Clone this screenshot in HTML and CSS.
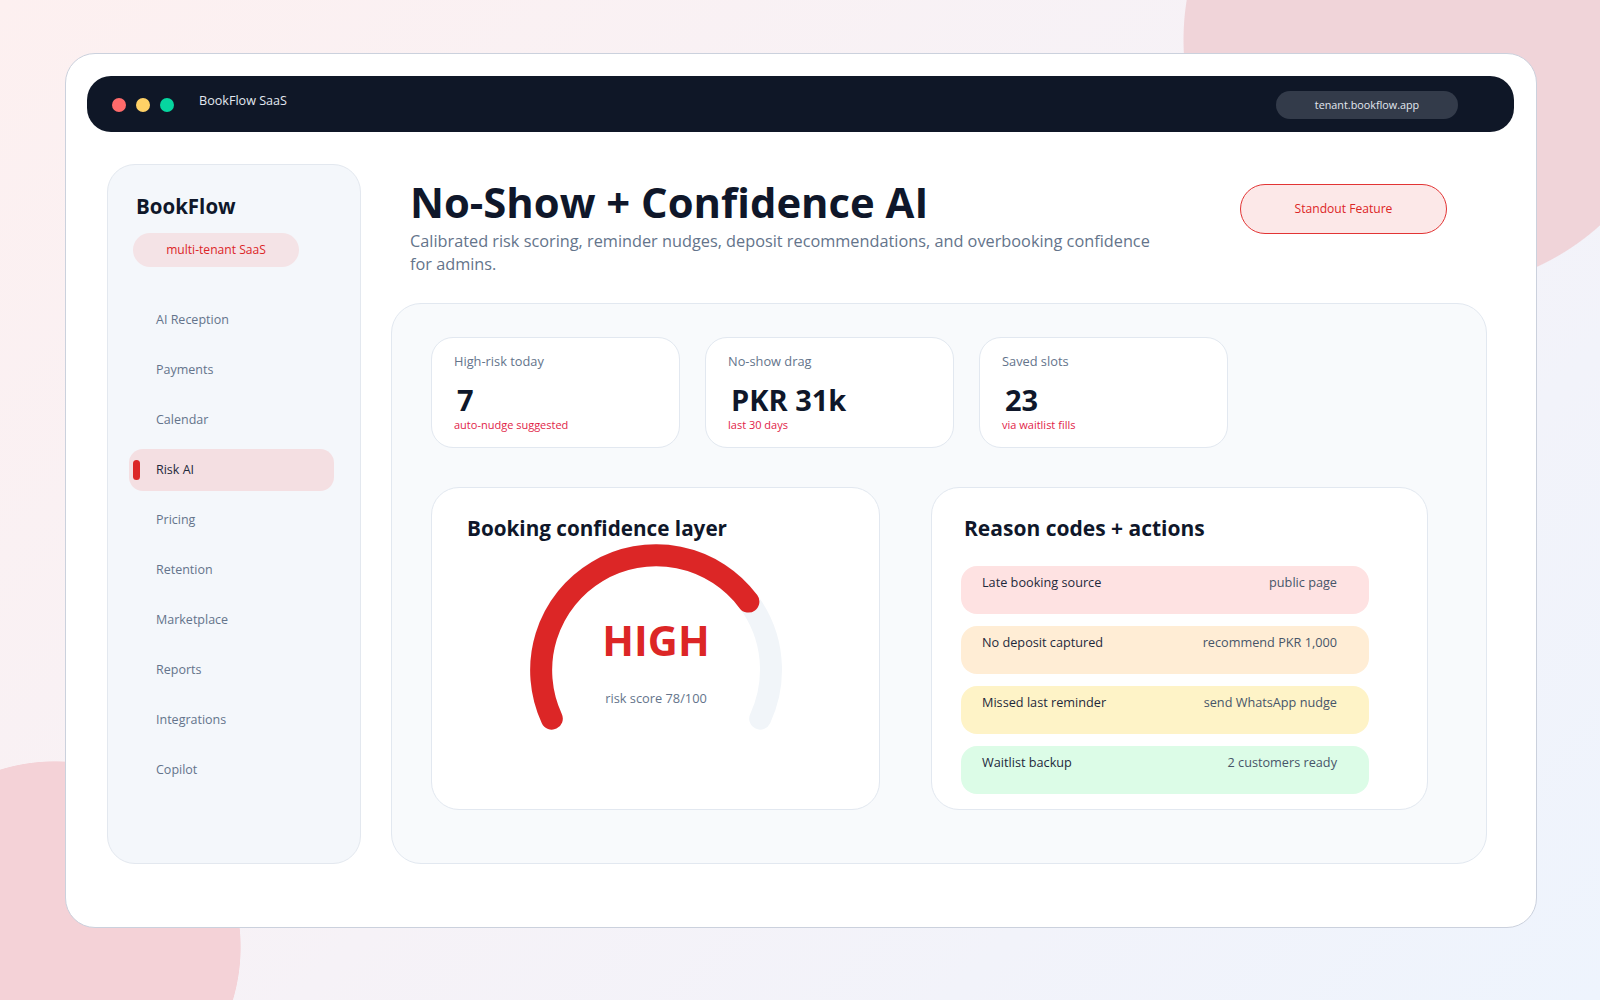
FILE: index.html
```html
<!DOCTYPE html>
<html lang="en">
<head>
<meta charset="utf-8">
<title>BookFlow SaaS – No-Show + Confidence AI</title>
<link rel="stylesheet" href="styles.css">
</head>
<body>
<div class="frame">
  <div class="topbar">
    <span class="dot dot-red"></span>
    <span class="dot dot-yellow"></span>
    <span class="dot dot-green"></span>
    <span class="topbar-title">BookFlow SaaS</span>
    <span class="url-pill">tenant.bookflow.app</span>
  </div>

  <div class="layout">
    <aside class="sidebar">
      <div class="brand">BookFlow</div>
      <div class="tenant-pill">multi-tenant SaaS</div>
      <nav class="nav">
        <div class="nav-item">AI Reception</div>
        <div class="nav-item">Payments</div>
        <div class="nav-item">Calendar</div>
        <div class="nav-item active">Risk AI</div>
        <div class="nav-item">Pricing</div>
        <div class="nav-item">Retention</div>
        <div class="nav-item">Marketplace</div>
        <div class="nav-item">Reports</div>
        <div class="nav-item">Integrations</div>
        <div class="nav-item">Copilot</div>
      </nav>
    </aside>

    <main class="main">
      <header class="header">
        <div class="header-text">
          <h1 class="title">No-Show + Confidence AI</h1>
          <p class="subtitle">Calibrated risk scoring, reminder nudges, deposit recommendations, and overbooking confidence for admins.</p>
        </div>
        <div class="standout">Standout Feature</div>
      </header>

      <section class="panel">
        <div class="stats">
          <div class="stat">
            <div class="stat-label">High-risk today</div>
            <div class="stat-value">7</div>
            <div class="stat-sub">auto-nudge suggested</div>
          </div>
          <div class="stat">
            <div class="stat-label">No-show drag</div>
            <div class="stat-value">PKR 31k</div>
            <div class="stat-sub">last 30 days</div>
          </div>
          <div class="stat">
            <div class="stat-label">Saved slots</div>
            <div class="stat-value">23</div>
            <div class="stat-sub">via waitlist fills</div>
          </div>
        </div>

        <div class="cards">
          <div class="card card-gauge">
            <h2 class="card-title gauge-title">Booking confidence layer</h2>
            <div class="gauge">
              <svg class="gauge-svg" width="260" height="192" viewBox="0 0 260 192">
                <path d="M 25.8 176.6 A 115 115 0 1 1 234.2 176.6" fill="none" stroke="#f1f5f9" stroke-width="22" stroke-linecap="round"/>
                <path d="M 25.8 176.6 A 115 115 0 0 1 222.4 59.6" fill="none" stroke="#dc2626" stroke-width="22" stroke-linecap="round"/>
              </svg>
              <div class="gauge-label">
                <div class="gauge-level">HIGH</div>
                <div class="gauge-score">risk score 78/100</div>
              </div>
            </div>
          </div>

          <div class="card card-reasons">
            <h2 class="card-title reasons-title">Reason codes + actions</h2>
            <div class="reasons">
              <div class="reason reason-pink"><span>Late booking source</span><span class="reason-action">public page</span></div>
              <div class="reason reason-orange"><span>No deposit captured</span><span class="reason-action">recommend PKR 1,000</span></div>
              <div class="reason reason-yellow"><span>Missed last reminder</span><span class="reason-action">send WhatsApp nudge</span></div>
              <div class="reason reason-green"><span>Waitlist backup</span><span class="reason-action">2 customers ready</span></div>
            </div>
          </div>
        </div>
      </section>
    </main>
  </div>
</div>
</body>
</html>
```

FILE: styles.css
```css
* { box-sizing: border-box; }

html, body {
  margin: 0;
  padding: 0;
}

body {
  width: 1600px;
  height: 1000px;
  overflow: hidden;
  font-family: "Open Sans", "Noto Sans", "Liberation Sans", sans-serif;
  color: #0f172a;
  background:
    radial-gradient(circle 250px at 1433px 40px, #f0d4d9 99.6%, rgba(240, 212, 217, 0) 100%),
    radial-gradient(circle 186px at 55px 947px, #f4d2d7 99.6%, rgba(244, 210, 215, 0) 100%),
    linear-gradient(135deg, #fdf0f0 0%, #f6f2f7 50%, #eef4fd 100%);
  background-repeat: no-repeat;
}

.frame {
  margin: 53px 0 0 65px;
  width: 1472px;
  height: 875px;
  background: #ffffff;
  border: 1px solid #cbd1dd;
  border-radius: 30px;
  padding: 22px 22px 0 21px;
}

/* top bar */
.topbar {
  height: 56px;
  background: #0f1727;
  border-radius: 24px;
  display: flex;
  align-items: center;
  padding: 2px 25px 0 25px;
}
.dot {
  width: 14px;
  height: 14px;
  border-radius: 50%;
  margin-right: 10px;
  flex: none;
}
.dot-red { background: #ff6b6b; }
.dot-yellow { background: #ffd166; }
.dot-green { background: #06d6a0; margin-right: 25px; }
.topbar-title {
  color: #e2e8f0;
  font-size: 12.6px;
  margin-bottom: 9px;
}
.url-pill {
  margin-left: auto;
  margin-right: 31px;
  width: 182px;
  height: 28px;
  border-radius: 14px;
  background: #333b4a;
  color: #e2e8f0;
  font-size: 10.8px;
  line-height: 28px;
  text-align: center;
}

/* layout */
.layout {
  margin: 32px 0 0 20px;
  display: grid;
  grid-template-columns: 254px 1096px;
  column-gap: 30px;
}

/* sidebar */
.sidebar {
  height: 700px;
  background: #f4f7fb;
  border: 1px solid #e3e8ef;
  border-radius: 28px;
  padding: 27px 26px 0 21px;
}
.brand {
  font-weight: 700;
  font-size: 20.5px;
  line-height: 28px;
  margin-left: 7px;
  color: #0f172a;
}
.tenant-pill {
  margin: 13px 0 0 4px;
  width: 166px;
  height: 34px;
  border-radius: 17px;
  background: #f4e3e6;
  color: #dc2626;
  font-size: 12.1px;
  line-height: 34px;
  text-align: center;
}
.nav {
  margin-top: 32px;
  display: flex;
  flex-direction: column;
  gap: 8px;
}
.nav-item {
  position: relative;
  width: 205px;
  height: 42px;
  border-radius: 14px;
  padding-left: 27px;
  font-size: 12.5px;
  line-height: 42px;
  color: #64748b;
}
.nav-item.active {
  background: #f4dfe2;
  color: #1e293b;
}
.nav-item.active::before {
  content: "";
  position: absolute;
  left: 4px;
  top: 11px;
  width: 7px;
  height: 20px;
  border-radius: 4px;
  background: #dc2626;
}

/* main */
.main {
  display: flex;
  flex-direction: column;
}
.header {
  display: flex;
  justify-content: space-between;
  align-items: flex-start;
  padding: 15px 40px 0 19px;
  height: 139px;
}
.title {
  margin: 0;
  font-size: 41.8px;
  line-height: 45px;
  font-weight: 700;
  color: #0f172a;
}
.subtitle {
  margin: 6px 0 0 0;
  max-width: 762px;
  font-size: 16.3px;
  line-height: 22.5px;
  color: #64748b;
}
.standout {
  margin-top: 5px;
  width: 207px;
  height: 50px;
  border: 1px solid #e23434;
  border-radius: 25px;
  background: #fce8e8;
  color: #dc2626;
  font-size: 12.1px;
  line-height: 48px;
  text-align: center;
  flex: none;
}

.panel {
  height: 561px;
  background: #f8fafc;
  border: 1px solid #e2e8f0;
  border-radius: 30px;
  padding: 33px 0 0 39px;
}

.stats {
  display: grid;
  grid-template-columns: repeat(3, 249px);
  column-gap: 25px;
}
.stat {
  height: 111px;
  background: #ffffff;
  border: 1px solid #e2e8f0;
  border-radius: 22px;
  padding: 14px 22px 0 22px;
}
.stat-label {
  font-size: 12.8px;
  line-height: 18px;
  color: #64748b;
}
.stat-value {
  margin-top: 12px;
  padding-left: 3px;
  font-size: 29px;
  line-height: 35px;
  font-weight: 700;
  color: #0f172a;
}
.stat-sub {
  font-size: 11px;
  line-height: 15px;
  color: #e11d48;
}

.cards {
  margin-top: 39px;
  display: grid;
  grid-template-columns: 449px 497px;
  column-gap: 51px;
}
.card {
  height: 323px;
  background: #ffffff;
  border: 1px solid #e2e8f0;
  border-radius: 28px;
}
.card-title {
  margin: 0;
  font-size: 21px;
  line-height: 28px;
  font-weight: 700;
  color: #0f172a;
}
.gauge-title {
  font-size: 20.7px;
}
.card-gauge {
  padding: 26px 0 0 35px;
}
.gauge {
  position: relative;
  width: 260px;
  height: 192px;
  margin-left: 59px;
}
.gauge-svg { display: block; }
.gauge-label {
  position: absolute;
  left: 0;
  right: 0;
  top: 75px;
  text-align: center;
}
.gauge-level {
  font-size: 41.5px;
  line-height: 46px;
  font-weight: 700;
  color: #dc2626;
}
.gauge-score {
  margin-top: 26px;
  font-size: 12.8px;
  line-height: 18px;
  color: #64748b;
}

.card-reasons {
  padding: 26px 0 0 29px;
}
.reasons-title {
  padding-left: 3px;
}
.reasons {
  margin-top: 24px;
  display: flex;
  flex-direction: column;
  gap: 12px;
}
.reason {
  width: 408px;
  height: 48px;
  border-radius: 16px;
  padding: 7px 32px 0 21px;
  display: flex;
  justify-content: space-between;
  align-items: flex-start;
  font-size: 12.7px;
  line-height: 18px;
  color: #1e293b;
}
.reason-action { color: #475569; }
.reason-pink { background: #fee2e2; }
.reason-orange { background: #ffedd5; }
.reason-yellow { background: #fef3c7; }
.reason-green { background: #dcfce7; }
```
